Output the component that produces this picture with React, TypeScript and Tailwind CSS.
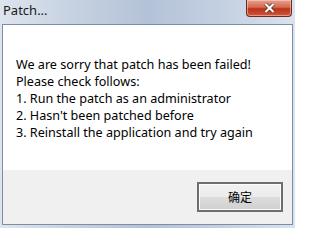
export default function App() {
  return (
    <div className="relative h-[228px] w-[295px] overflow-hidden bg-[linear-gradient(90deg,#dde5ee_0%,#c6d1e1_25%,#b4c2d8_50%,#c4d0e2_75%,#d9e2ed_100%)] font-['Noto_Sans','Liberation_Sans',sans-serif]">
      <div className="flex h-[24px] items-start">
        <span className="ml-[3px] mt-[2px] text-[13px] leading-[16px] text-[#1a1a1a]">Patch...</span>
      </div>
      <div className="absolute right-[3px] top-0 flex h-[17px] w-[46px] items-center justify-center rounded-b-[4px] border border-t-0 border-[#6d2a22] bg-[linear-gradient(180deg,#e6a090_0%,#d4694f_45%,#bb3219_55%,#d0583a_100%)] shadow-[inset_0_0_0_1px_rgba(255,220,210,0.5)]">
        <svg width="11" height="10" viewBox="0 0 11 10">
          <path d="M1.5 1 L9.5 9 M9.5 1 L1.5 9" stroke="#4a1d14" strokeWidth="3.4" />
          <path d="M1.5 1 L9.5 9 M9.5 1 L1.5 9" stroke="#ffffff" strokeWidth="2.2" />
        </svg>
      </div>
      <div className="mx-[2px] flex h-[201px] flex-col border border-[#7d8ea3]">
        <div className="h-[145px] bg-white px-[13px] pt-[31px] text-[12.6px] leading-[17px] text-black">
          <p>We are sorry that patch has been failed!</p>
          <p>Please check follows:</p>
          <p>1. Run the patch as an administrator</p>
          <p>2. Hasn't been patched before</p>
          <p>3. Reinstall the application and try again</p>
        </div>
        <div className="flex flex-1 items-start justify-end bg-[#f0f0f0] pr-[9px] pt-[12px]">
          <button className="h-[30px] w-[86px] border-2 border-[#6e6e6e] bg-[linear-gradient(180deg,#f2f2f2_0%,#ebebeb_50%,#dddddd_51%,#cfcfcf_100%)] font-['Noto_Sans_CJK_SC',sans-serif] text-[12px] text-black shadow-[inset_0_0_0_1px_#fcfcfc]">
            确定
          </button>
        </div>
      </div>
    </div>
  );
}
